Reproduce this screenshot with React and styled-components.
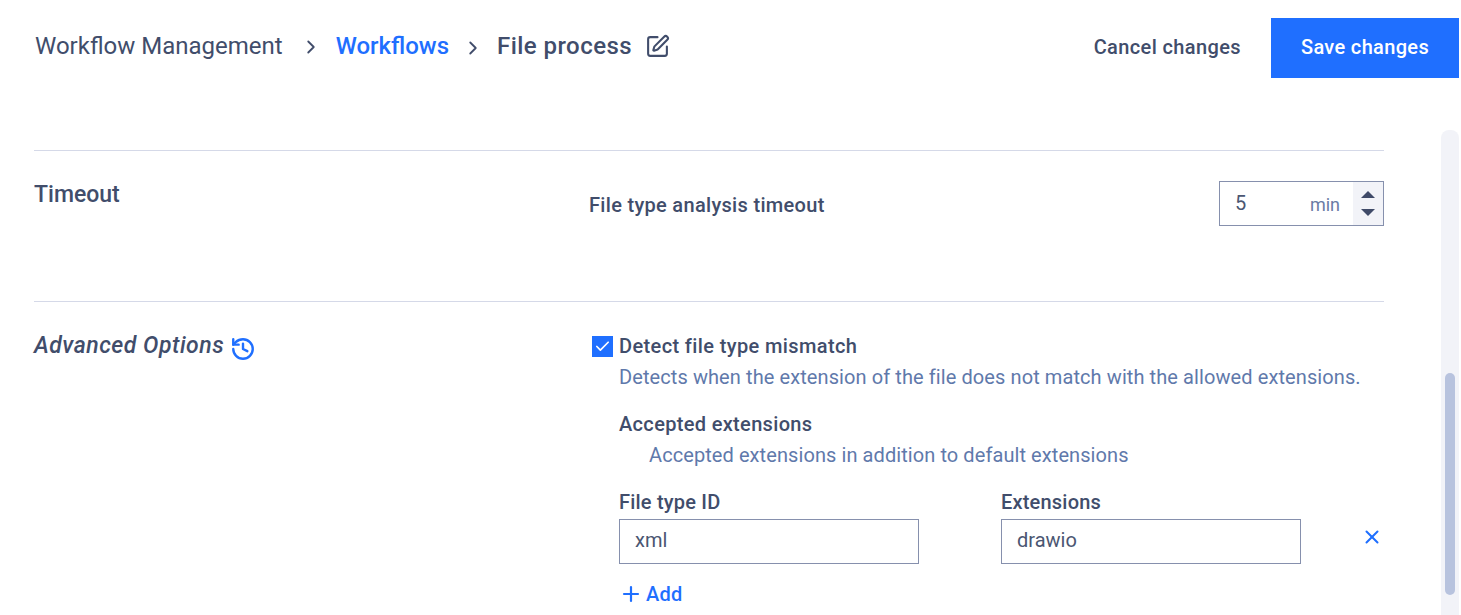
import React from "react";
import styled, { createGlobalStyle } from "styled-components";
import { ChevronRight, SquarePen, History, X, Plus, Check } from "lucide-react";

const Global = createGlobalStyle`
  html, body { margin: 0; padding: 0; height: 100%; background: #fff; overflow: hidden; }
  body { font-family: Roboto, "Liberation Sans", sans-serif; color: #3d4a68; }
  * { box-sizing: border-box; }
`;

const Page = styled.div`
  width: 1461px;
  height: 615px;
  overflow: hidden;
  display: flex;
  flex-direction: column;
`;

const Header = styled.header`
  height: 130px;
  flex: none;
  padding: 18px 2px 0 35px;
  display: flex;
  justify-content: space-between;
  align-items: flex-start;
`;

const Crumbs = styled.nav`
  height: 56px;
  display: flex;
  align-items: center;
  font-size: 24px;
`;

const Crumb = styled.span`
  font-weight: ${(p) => (p.$strong ? 500 : 400)};
  color: ${(p) => (p.$link ? "#1f6fff" : "#414d6b")};
  letter-spacing: ${(p) => p.$spacing || "0"};
`;

const Chevron = styled(ChevronRight)`
  color: #414d6b;
  margin: ${(p) => p.$margin};
  flex: none;
`;

const Edit = styled(SquarePen)`
  color: #414d6b;
  margin-left: 13px;
`;

const Actions = styled.div`
  display: flex;
  align-items: center;
  gap: 30px;
`;

const Cancel = styled.button`
  border: 0;
  background: none;
  padding: 0 0 2px;
  font: 500 20px Roboto, sans-serif;
  letter-spacing: 0.38px;
  color: #414d6b;
`;

const Save = styled.button`
  width: 188px;
  height: 60px;
  border: 0;
  padding: 0 0 2px;
  background: #1f6fff;
  color: #fff;
  font: 500 20px Roboto, sans-serif;
  letter-spacing: 0.34px;
`;

const Body = styled.div`
  flex: 1;
  display: flex;
  min-height: 0;
`;

const Content = styled.main`
  width: 1350px;
  margin-left: 34px;
  padding-top: 20px;
`;

const Section = styled.section`
  border-top: 1px solid #d5d9e8;
  display: grid;
  grid-template-columns: 555px 1fr;
  align-items: start;
  height: ${(p) => p.$height || "auto"};
`;

const SectionTitle = styled.h2`
  margin: 0;
  font-size: 23px;
  line-height: 28px;
  font-weight: 500;
  font-style: ${(p) => (p.$italic ? "italic" : "normal")};
  letter-spacing: ${(p) => (p.$italic ? "0.5px" : "0")};
  color: #414d6b;
  display: flex;
  align-items: center;
  padding-top: ${(p) => (p.$italic ? "28px" : "30px")};
`;

const HistoryIcon = styled(History)`
  color: #1f6fff;
  margin: 6px 0 0 6px;
`;

const TimeoutRow = styled.div`
  display: flex;
  justify-content: space-between;
  align-items: flex-start;
  padding-top: 30px;
`;

const FieldName = styled.span`
  font-size: 20px;
  font-weight: 500;
  line-height: 48px;
  letter-spacing: 0.31px;
  color: #414d6b;
`;

const Spinner = styled.div`
  width: 165px;
  height: 45px;
  border: 1px solid #8690ad;
  display: flex;
  align-items: center;
`;

const SpinValue = styled.span`
  margin-left: 15px;
  font-size: 20px;
  color: #4b5672;
  flex: 1;
  padding-bottom: 2px;
`;

const SpinUnit = styled.span`
  font-size: 18px;
  color: #6a7ba5;
  margin: 2px 13px 0 0;
`;

const SpinButtons = styled.div`
  width: 30px;
  height: 100%;
  background: #f2f3f8;
  display: flex;
  flex-direction: column;
  align-items: center;
  justify-content: center;
  gap: 11px;
`;

const Options = styled.div`
  padding: 31px 0 0 3px;
`;

const CheckRow = styled.div`
  display: flex;
  align-items: center;
  height: 26px;
  gap: 6px;
`;

const Box = styled.span`
  width: 21px;
  height: 21px;
  background: #1f6fff;
  color: #fff;
  display: flex;
  align-items: center;
  justify-content: center;
`;

const Label = styled.div`
  font-size: 20px;
  font-weight: 500;
  line-height: 26px;
  letter-spacing: ${(p) => p.$spacing || "0.36px"};
  color: #414d6b;
`;

const Help = styled.div`
  font-size: 20px;
  line-height: 26px;
  color: #5f79ab;
  letter-spacing: ${(p) => p.$spacing};
  margin-top: 5px;
  margin-left: ${(p) => p.$left || "0"};
`;

const Indented = styled.div`
  margin-left: 27px;
`;

const Gap = styled.div`
  height: ${(p) => p.$h};
`;

const Fields = styled.div`
  display: flex;
  align-items: flex-start;
  margin-top: 21px;
`;

const Field = styled.div`
  width: 300px;
  margin-right: 82px;
`;

const Input = styled.div`
  height: 45px;
  margin-top: 4px;
  padding-left: 15px;
  border: 1px solid #8690ad;
  font-size: 20px;
  line-height: 40px;
  color: #4b5672;
`;

const Remove = styled(X)`
  color: #1f6fff;
  margin: 37px 0 0 -22px;
`;

const AddLink = styled.div`
  display: flex;
  align-items: center;
  gap: 3px;
  margin-top: 17px;
  font-size: 20px;
  font-weight: 500;
  color: #1f6fff;
  line-height: 26px;
  letter-spacing: 0.2px;
`;

const Track = styled.div`
  width: 18px;
  margin-left: 57px;
  border-radius: 8px 8px 0 0;
  background: #f2f3f8;
  padding: 243px 4px 0;
`;

const Thumb = styled.div`
  height: 222px;
  border-radius: 6px;
  background: #b8c3de;
`;

const Arrow = ({ up }) => (
  <svg width="16" height="7" viewBox="0 0 16 7" aria-hidden="true">
    <path d={up ? "M8 0 15 7H1Z" : "M1 0H15L8 7Z"} fill="#3f4a68" />
  </svg>
);

export default function App() {
  return (
    <Page>
      <Global />
      <Header>
        <Crumbs>
          <Crumb>Workflow Management</Crumb>
          <Chevron size={22} $margin="2px 14px 0 17px" />
          <Crumb $link $strong>Workflows</Crumb>
          <Chevron size={22} $margin="3px 13px 0 13px" />
          <Crumb $strong $spacing="0.45px">File process</Crumb>
          <Edit size={25} strokeWidth={2} />
        </Crumbs>
        <Actions>
          <Cancel>Cancel changes</Cancel>
          <Save>Save changes</Save>
        </Actions>
      </Header>
      <Body>
        <Content>
          <Section $height="151px">
            <SectionTitle>Timeout</SectionTitle>
            <TimeoutRow>
              <FieldName>File type analysis timeout</FieldName>
              <Spinner>
                <SpinValue>5</SpinValue>
                <SpinUnit>min</SpinUnit>
                <SpinButtons>
                  <Arrow up />
                  <Arrow />
                </SpinButtons>
              </Spinner>
            </TimeoutRow>
          </Section>
          <Section>
            <SectionTitle $italic>
              Advanced Options
              <HistoryIcon size={26} strokeWidth={2.2} />
            </SectionTitle>
            <Options>
              <CheckRow>
                <Box><Check size={17} strokeWidth={2.4} /></Box>
                <Label $spacing="0.38px">Detect file type mismatch</Label>
              </CheckRow>
              <Indented>
                <Help $spacing="0.09px">Detects when the extension of the file does not match with the allowed extensions.</Help>
                <Gap $h="21px" />
                <Label $spacing="0.33px">Accepted extensions</Label>
                <Help $left="30px" $spacing="0.08px">Accepted extensions in addition to default extensions</Help>
                <Fields>
                  <Field>
                    <Label $spacing="0.2px">File type ID</Label>
                    <Input>xml</Input>
                  </Field>
                  <Field>
                    <Label $spacing="0.2px">Extensions</Label>
                    <Input>drawio</Input>
                  </Field>
                  <Remove size={22} strokeWidth={2.2} />
                </Fields>
                <AddLink>
                  <Plus size={24} strokeWidth={2.2} />
                  Add
                </AddLink>
              </Indented>
            </Options>
          </Section>
        </Content>
        <Track>
          <Thumb />
        </Track>
      </Body>
    </Page>
  );
}
